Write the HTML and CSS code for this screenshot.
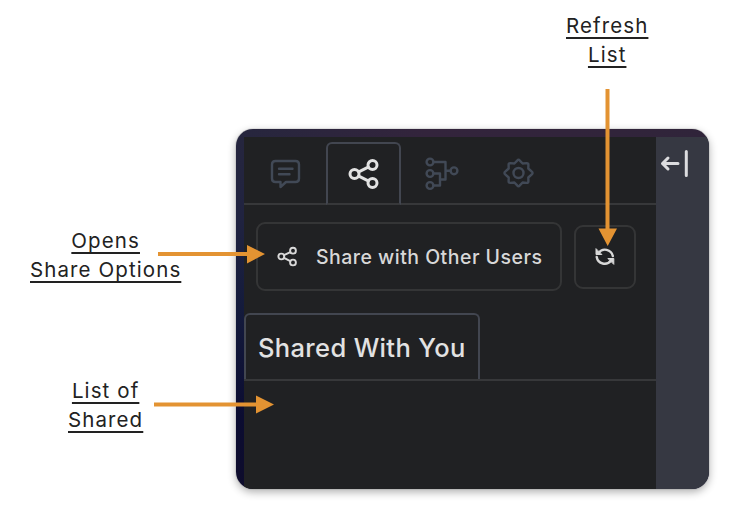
FILE: index.html
```html
<!DOCTYPE html>
<html lang="en">
<head>
<meta charset="utf-8">
<title>Share panel</title>
<link rel="stylesheet" href="styles.css">
</head>
<body>
<main class="canvas">
  <section class="window">
    <div class="panel">
      <nav class="tabs">
        <button class="tab" aria-label="Comments">
          <svg width="34" height="34" viewBox="0 0 34 34"><path d="M6.500 4H26.500Q30 4 30 7.500V21.500Q30 25 26.500 25H17L11.500 30V25H6.500Q3 25 3 21.500V7.500Q3 4 6.500 4ZM10 11.800H23.500M10 17.200H20.500"/></svg>
        </button>
        <button class="tab tab-active" aria-label="Share">
          <svg width="34" height="34" viewBox="0 0 34 34"><circle cx="7.500" cy="17" r="4.500"/><circle cx="25.500" cy="8" r="4.500"/><circle cx="25.500" cy="26" r="4.500"/><path d="M11.800 14.900 21.200 10.200M11.800 19.100 21.200 23.800"/></svg>
        </button>
        <button class="tab" aria-label="Workflow">
          <svg width="36" height="36" viewBox="0 0 36 36"><circle cx="6" cy="6" r="3.400"/><circle cx="6" cy="17.500" r="3.400"/><circle cx="6" cy="29.500" r="3.400"/><circle cx="30" cy="14.800" r="3.400"/><path d="M9.500 6H21.500V23.500H16M9.500 17.500H16V29.500H9.500M21.500 14.800H26.500"/></svg>
        </button>
        <button class="tab" aria-label="Settings">
          <svg width="34" height="34" viewBox="0 0 34 34"><path d="M14.200 3.600Q15.500 2 16.800 3.600L19.600 6.500 23.800 6.100Q25.400 6.100 25.400 7.700L25.300 11.500 28.800 14.700Q30.300 16 28.800 17.300L25.300 20.500 25.400 24.300Q25.400 25.900 23.800 25.900L19.600 25.500 16.800 28.400Q15.500 30 14.200 28.400L11.400 25.500 7.200 25.900Q5.600 25.900 5.600 24.300L5.700 20.500 2.200 17.300Q.7 16 2.200 14.700L5.700 11.500 5.600 7.700Q5.600 6.100 7.200 6.100L11.400 6.500Z"/><circle cx="15.500" cy="16" r="5"/></svg>
        </button>
      </nav>
      <div class="actions">
        <button class="share">
          <svg width="22" height="22" viewBox="0 0 22 22"><circle cx="4.300" cy="10.500" r="2.900"/><circle cx="16" cy="4.700" r="2.900"/><circle cx="16" cy="16.500" r="2.900"/><path d="M7 9.200 13.300 6.100M7 11.800 13.300 15.200"/></svg>
          <span>Share with Other Users</span>
        </button>
        <button class="refresh" aria-label="Refresh">
          <svg width="22" height="22" viewBox="0 0 22 22"><path d="M4.500 7A8 8 0 0 1 18.800 10M17 14.500A8 8 0 0 1 2.700 11"/><path class="solid" d="M2 3V8.500H7.500ZM19.800 18V12.500H14.300Z"/></svg>
        </button>
      </div>
      <div class="list-tabs"><h2 class="list-tab">Shared With You</h2></div>
    </div>
    <aside class="rail">
      <svg width="30" height="30" viewBox="0 0 30 30"><path d="M20 14.500H4.500M10 9 4.500 14.500 10 20M28.300 2.500V26.500"/></svg>
    </aside>
  </section>

  <p class="note note-refresh">Refresh<br>List</p>
  <p class="note note-opens">Opens<br>Share Options</p>
  <p class="note note-list">List of<br>Shared</p>
  <svg class="arrows" width="746" height="514" viewBox="0 0 746 514">
    <path class="shaft" d="M607.500 89V230M158 254H248M154 404.500H257"/>
    <path class="head" d="M598.500 228.500H617L607.700 246ZM247 245V263.500L265 254ZM256 395.500V413.500L274 404.500Z"/>
  </svg>
</main>
</body>
</html>
```
FILE: styles.css
```css
* { box-sizing: border-box; }

body {
  margin: 0;
  background: #fff;
  font-family: Inter, "Liberation Sans", sans-serif;
}

.canvas {
  position: relative;
  width: 746px;
  height: 514px;
  padding: 129px 37px 25px 236px;
  overflow: hidden;
}

.window {
  display: flex;
  height: 360px;
  padding: 8px 0 0 8px;
  border-radius: 17px;
  overflow: hidden;
  background:
    linear-gradient(90deg, #26263e, #33243c 40%, #30243a) top / 100% 8px no-repeat,
    linear-gradient(#26263e, #202340 25%, #141b3c 50%, #0b0c31 80%, #0e0c2c);
  box-shadow: 0 0 1px #555, 0 3px 8px rgba(0, 0, 0, 0.32);
}

.panel {
  width: 412px;
  background: #202123;
}

.rail {
  flex: 1;
  padding: 12px 0 0 2px;
  background: #363842;
}

svg {
  display: block;
  flex: none;
  fill: none;
  stroke: currentColor;
  stroke-width: 2.4;
  stroke-linecap: round;
  stroke-linejoin: round;
}

.rail svg {
  color: #dcdcdf;
  stroke-width: 3;
}

button {
  display: flex;
  align-items: center;
  justify-content: center;
  padding: 0;
  border: 0;
  background: none;
  font: inherit;
}

.tabs {
  display: flex;
  height: 68px;
  padding: 5px 0 0 4px;
  border-bottom: 2px solid #37383a;
}

.tab {
  width: 75px;
  height: 63px;
  color: #414956;
}

.tab:first-child { margin-right: 3px; }
.tab:nth-child(3) { width: 81px; }

.tab-active {
  border: 2px solid #424650;
  border-bottom-color: #37383a;
  border-radius: 6px 6px 0 0;
  color: #e2e2e2;
}

.tab-active svg { stroke-width: 3; }

.actions {
  display: flex;
  align-items: center;
  gap: 12px;
  padding: 17px 0 0 12px;
}

.share,
.refresh {
  border: 2px solid #343536;
  border-radius: 9px;
  color: #d8d8d8;
}

.share {
  width: 306px;
  height: 69px;
  gap: 17px;
  justify-content: flex-start;
  padding-left: 19px;
  font-size: 19.500px;
  font-weight: 500;
  letter-spacing: 0.480px;
  white-space: nowrap;
}

.share svg { stroke-width: 1.900; }

.refresh {
  width: 62px;
  height: 64px;
}

.solid { fill: currentColor; stroke-width: 1; }

.list-tabs {
  display: flex;
  margin-top: 22px;
  border-bottom: 2px solid #37383a;
}

.list-tab {
  width: 236px;
  height: 66px;
  margin: 0;
  padding-left: 12px;
  border: 2px solid #424650;
  border-bottom: 0;
  border-radius: 6px 6px 0 0;
  color: #e2e2e2;
  font-size: 25.500px;
  font-weight: 500;
  letter-spacing: 0.350px;
  line-height: 65px;
  white-space: nowrap;
}

.note {
  position: absolute;
  margin: 0;
  color: #222;
  font-size: 20.500px;
  line-height: 29px;
  letter-spacing: 1.100px;
  text-align: center;
  text-decoration: underline;
  text-decoration-thickness: 1.500px;
  text-underline-offset: 4px;
  text-decoration-skip-ink: none;
  white-space: nowrap;
}

.note-refresh { left: 566px; top: 11px; }
.note-opens { left: 30px; top: 226px; }
.note-list { left: 68px; top: 376px; }

.arrows {
  position: absolute;
  inset: 0;
}

.shaft {
  stroke: #e39332;
  stroke-width: 4;
  stroke-linecap: butt;
}

.head {
  fill: #e39332;
  stroke: none;
}
```
